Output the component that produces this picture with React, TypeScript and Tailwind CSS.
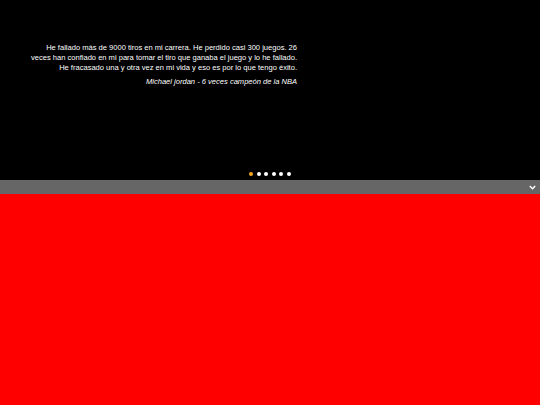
import React from "react";

export default function App() {
  return (
    <div className="w-[540px] h-[405px] flex flex-col bg-[#ff0000]" style={{ fontFamily: '"Liberation Sans", Arial, sans-serif' }}>
      <div className="h-[180px] bg-black flex flex-col relative">
        <div className="w-[297px] pt-[43px] text-right text-white text-[7.55px] leading-[10px]">
          <p className="whitespace-nowrap">He fallado más de 9000 tiros en mi carrera. He perdido casi 300 juegos. 26</p>
          <p className="whitespace-nowrap">veces han confiado en mi para tomar el tiro que ganaba el juego y lo he fallado.</p>
          <p className="whitespace-nowrap">He fracasado una y otra vez en mi vida y eso es por lo que tengo éxito.</p>
          <p className="whitespace-nowrap italic mt-[4px]">Michael jordan - 6 veces campeón de la NBA</p>
        </div>
        <div className="absolute left-[249px] top-[172px] flex gap-[3.5px]">
          <span className="w-[4px] h-[4px] rounded-full bg-[#f5a623]" />
          <span className="w-[4px] h-[4px] rounded-full bg-white" />
          <span className="w-[4px] h-[4px] rounded-full bg-white" />
          <span className="w-[4px] h-[4px] rounded-full bg-white" />
          <span className="w-[4px] h-[4px] rounded-full bg-white" />
          <span className="w-[4px] h-[4px] rounded-full bg-white" />
        </div>
      </div>
      <div className="h-[14px] bg-[#666666] flex items-center justify-end pr-[4px]">
        <svg width="7" height="5" viewBox="0 0 7 5">
          <path d="M0.8 1 L3.5 3.7 L6.2 1" stroke="white" strokeWidth="1.5" fill="none" />
        </svg>
      </div>
      <div className="flex-1 bg-[#ff0000]" />
    </div>
  );
}
